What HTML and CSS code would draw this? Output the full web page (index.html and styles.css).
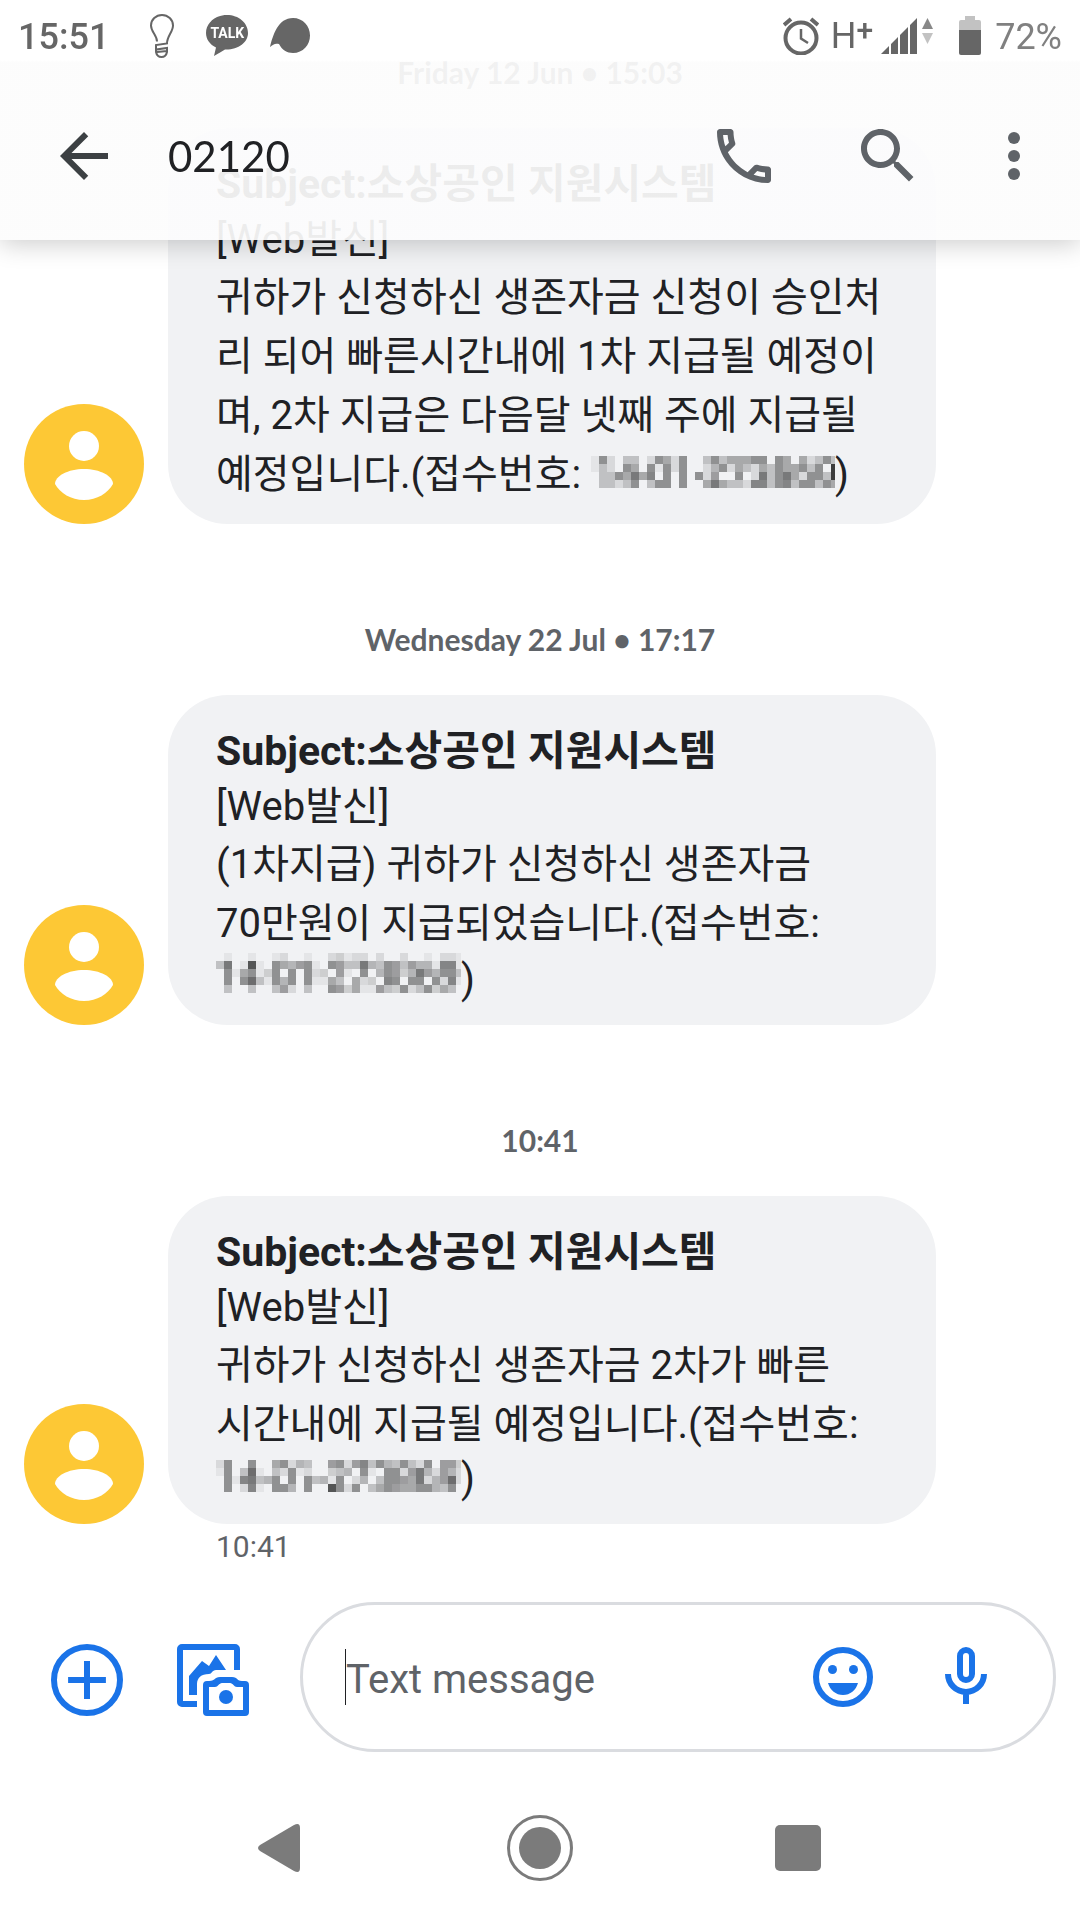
FILE: index.html
```html
<!DOCTYPE html>
<html lang="ko">
<head>
    <meta charset="UTF-8">
    <meta name="viewport" content="width=device-width, initial-scale=1.0">
    <title>02120</title>
    <link rel="stylesheet" href="styles.css">
</head>
<body>
    <header class="top">
        <div class="status">
            <span class="clock">15:51</span>
            <div class="notifications">
                <svg class="bulb" width="24" height="44" viewBox="0 0 24 44"><path d="M7 27.500C7 21 1 18 1 11.500a11 10.500 0 0 1 22 0C23 18 17 22 17 29.500L6 31v4.500l11-1.500v4q-1 5-5.500 5T6 38v-4M7 38l10-1" fill="none" stroke="#666" stroke-width="2"/></svg>
                <div class="talk">
                    <svg width="42" height="42" viewBox="0 0 42 42"><path d="M21 0C9.400 0 0 7.800 0 18c0 6.500 4 11.500 10 14.500L8 41l11-6.500c13 .5 23-7 23-16.500C42 7.800 32.600 0 21 0z" fill="#666"/></svg>
                    <span class="talk-text">TALK</span>
                </div>
                <svg width="40" height="36" viewBox="0 0 40 36"><path d="M0 29C3 17 8 0 23 0c10 0 17 8 17 17.500S33 35 23 35c-6 0-11-3-14-9-4-1-6 .5-9 3z" fill="#666"/></svg>
            </div>
            <div class="system">
                <svg width="36" height="38" viewBox="0 0 36 38"><g fill="none" stroke="#666"><circle cx="18" cy="21" r="15.500" stroke-width="4"/><path d="M18 12v9.500l7 4.500" stroke-width="2.500"/><path d="M1 8l7-6M35 8l-7-6" stroke-width="4"/></g></svg>
                <span class="network">H<b>+</b></span>
                <svg width="52" height="36" viewBox="0 0 52 36"><path d="M0 36l8-8v8zM10 36V26l7-7v17zM19 36V17l8-8v27zM29 36V7l7-7v36z" fill="#666"/><path d="M41 11l5.500-11L52 11z" fill="#888"/><path d="M41 15h11l-5.500 11z" fill="#c2c2c2"/></svg>
                <svg class="battery" width="22" height="40" viewBox="0 0 22 40"><path d="M6 0h10v4h4q2 0 2 2v8H0V6q0-2 2-2h4z" fill="#c2c2c2"/><path d="M0 14h22v23q0 2-2 2H2q-2 0-2-2z" fill="#666"/></svg>
                <span class="percent">72%</span>
            </div>
        </div>
        <div class="toolbar">
            <button class="icon-btn back" aria-label="Back"><svg viewBox="0 0 24 24"><path d="M20 11H7.830l5.590-5.590L12 4l-8 8 8 8 1.410-1.410L7.830 13H20z" fill="#3c4043"/></svg></button>
            <h1 class="title">02120</h1>
            <button class="icon-btn call" aria-label="Call"><svg viewBox="0 0 24 24"><path d="M6.540 5c.06.89.21 1.760.45 2.590l-1.200 1.200c-.41-1.200-.67-2.470-.76-3.790h1.510m9.860 12.020c.85.24 1.720.39 2.600.45v1.490c-1.320-.09-2.590-.35-3.800-.75l1.200-1.190M7.500 3H4c-.55 0-1 .45-1 1 0 9.390 7.610 17 17 17 .55 0 1-.45 1-1v-3.490c0-.55-.45-1-1-1-1.240 0-2.450-.2-3.570-.57-.1-.04-.21-.05-.31-.05-.26 0-.51.1-.71.29l-2.200 2.200c-2.830-1.450-5.150-3.760-6.590-6.590l2.200-2.200c.28-.28.36-.67.25-1.020C8.700 6.450 8.500 5.250 8.500 4c0-.55-.45-1-1-1z"/></svg></button>
            <button class="icon-btn search" aria-label="Search"><svg viewBox="0 0 24 24"><path d="M15.500 14h-.79l-.28-.27C15.410 12.590 16 11.110 16 9.500 16 5.910 13.090 3 9.500 3S3 5.910 3 9.500 5.910 16 9.500 16c1.610 0 3.090-.59 4.230-1.570l.27.28v.79l5 4.990L20.490 19l-4.990-5zm-6 0C7.010 14 5 11.990 5 9.500S7.010 5 9.500 5 14 7.010 14 9.500 11.990 14 9.500 14z"/></svg></button>
            <button class="icon-btn more" aria-label="More options"><svg viewBox="0 0 24 24"><circle cx="12" cy="6" r="2"/><circle cx="12" cy="12" r="2"/><circle cx="12" cy="18" r="2"/></svg></button>
        </div>
    </header>

    <main class="messages">
        <p class="date">Friday 12 Jun • 15:03</p>
        <div class="message">
            <svg class="avatar" viewBox="0 0 120 120"><circle cx="60" cy="60" r="60" fill="#fdc835"/><circle cx="60" cy="42" r="15" fill="#fff"/><path d="M31 80c0-8 13-15 29-15s29 7 29 15c-5 9-16 16-29 16s-24-7-29-16z" fill="#fff"/></svg>
            <div class="bubble">
                <p class="subject">Subject:소상공인 지원시스템</p>
                <p class="origin">[Web발신]</p>
                <p class="text">귀하가 신청하신 생존자금 신청이 승인처<br>리 되어 빠른시간내에 1차 지급될 예정이<br>며, 2차 지급은 다음달 넷째 주에 지급될<br>예정입니다.(접수번호: <svg class="mosaic" data-width="244" data-rows="1820440286280048466688086062484 142086081828002582642648668480f 04486a690808082700802a48a62884f 044248048808006a644299489488486"></svg>)</p>
            </div>
        </div>

        <p class="date">Wednesday 22 Jul • 17:17</p>
        <div class="message">
            <svg class="avatar" viewBox="0 0 120 120"><circle cx="60" cy="60" r="60" fill="#fdc835"/><circle cx="60" cy="42" r="15" fill="#fff"/><path d="M31 80c0-8 13-15 29-15s29 7 29 15c-5 9-16 16-29 16s-24-7-29-16z" fill="#fff"/></svg>
            <div class="bubble">
                <p class="subject">Subject:소상공인 지원시스템</p>
                <p class="origin">[Web발신]</p>
                <p class="text">(1차지급) 귀하가 신청하신 생존자금<br>70만원이 지급되었습니다.(접수번호:</p>
                <p class="number"><svg class="mosaic" data-width="245" data-rows="0100100120010023122020020010221 4a01d1086578108744a548747551991 0816813808082307108058735a75884 0808b41858081164062309808808291 0400400472040087361174382483640"></svg>)</p>
            </div>
        </div>

        <p class="date">10:41</p>
        <div class="message">
            <svg class="avatar" viewBox="0 0 120 120"><circle cx="60" cy="60" r="60" fill="#fdc835"/><circle cx="60" cy="42" r="15" fill="#fff"/><path d="M31 80c0-8 13-15 29-15s29 7 29 15c-5 9-16 16-29 16s-24-7-29-16z" fill="#fff"/></svg>
            <div class="bubble">
                <p class="subject">Subject:소상공인 지원시스템</p>
                <p class="origin">[Web발신]</p>
                <p class="text">귀하가 신청하신 생존자금 2차가 빠른<br>시간내에 지급될 예정입니다.(접수번호:</p>
                <p class="number"><svg class="mosaic" data-width="245" data-rows="2800800682540078279485484280773 1804b10428120034508108827a52752 0819a45808084518025048876a257b2 08029108850800d8280468766885480"></svg>)</p>
            </div>
        </div>
        <p class="sent">10:41</p>
    </main>

    <form class="composer">
        <button type="button" class="attach" aria-label="Add"><svg width="72" height="72" viewBox="0 0 24 24"><circle cx="12" cy="12" r="11" fill="none" stroke="#1a73e8" stroke-width="2"/><path d="M5.700 11H11V5.700h2V11h5.300v2H13v5.300h-2V13H5.700z"/></svg></button>
        <button type="button" class="attach" aria-label="Gallery"><svg width="72" height="72" viewBox="0 0 72 72"><path d="M60 26V5a2 2 0 0 0-2-2H5a2 2 0 0 0-2 2v53a2 2 0 0 0 2 2h15" fill="none" stroke="#1a73e8" stroke-width="6"/><path d="M12 32l13-15 7 5 7-11 10 15H39c-4 0-4 4-7 4-8 0-12 4-12 10v11h-8z"/><path d="M32 37c3 0 5-1 7-3q2-1 4-1h12q2 0 4 1c2 2 3 3 6 3h3q4 0 4 4v27q0 4-4 4H30q-4 0-4-4V41q0-4 4-4zM32 43v23h34V43h-6c-3 0-4-4-7-4h-8c-3 0-4 4-7 4z" fill-rule="evenodd"/><circle cx="49" cy="53" r="7"/></svg></button>
        <div class="field">
            <span class="caret"></span>
            <input type="text" class="input" placeholder="Text message" aria-label="Text message">
            <button type="button" class="icon-btn emoji" aria-label="Emoji"><svg viewBox="0 0 24 24"><circle cx="12" cy="12" r="9" fill="none" stroke="#1a73e8" stroke-width="2"/><circle cx="8.500" cy="9.500" r="1.500"/><circle cx="15.500" cy="9.500" r="1.500"/><path d="M7 14h10c-.7 2.400-2.600 4-5 4s-4.300-1.600-5-4z"/></svg></button>
            <button type="button" class="icon-btn mic" aria-label="Voice"><svg viewBox="0 0 24 24"><rect x="10" y="3" width="4" height="10" rx="2" fill="none" stroke="#1a73e8" stroke-width="2"/><path d="M6 11a6 6 0 0 0 12 0M12 17v4" fill="none" stroke="#1a73e8" stroke-width="2"/></svg></button>
        </div>
    </form>

    <nav class="navbar">
        <button aria-label="Back"><svg width="48" height="48" viewBox="0 0 48 48"><path d="M2 21L36 1q6-3 6 3v40q0 6-6 3L2 27q-4-3 0-6z"/></svg></button>
        <button aria-label="Home"><svg width="66" height="66" viewBox="0 0 66 66"><circle cx="33" cy="33" r="31.500" fill="none" stroke="#7b7b7b" stroke-width="3"/><circle cx="33" cy="33" r="21"/></svg></button>
        <button aria-label="Recent apps"><svg width="46" height="46" viewBox="0 0 46 46"><rect width="46" height="46" rx="5"/></svg></button>
    </nav>

    <script src="script.js"></script>
</body>
</html>
```
FILE: styles.css
```css
* {
    box-sizing: border-box;
}
body {
    margin: 0;
    min-height: 100vh;
    display: flex;
    flex-direction: column;
    background-color: #fff;
    font-family: Roboto, "Noto Sans CJK KR", sans-serif;
    color: #202124;
}
p, h1 {
    margin: 0;
}
button {
    padding: 0;
    border: none;
    background: none;
    cursor: pointer;
}
svg {
    display: block;
    flex: none;
}

/* header lies over the scrolled messages */
.top {
    position: fixed;
    top: 0;
    left: 0;
    right: 0;
    z-index: 1;
    background: linear-gradient(#fff 60px, rgba(252, 252, 252, 0.93) 62px);
    box-shadow: 0 4px 24px rgba(0, 0, 0, 0.2);
}
.status {
    display: flex;
    align-items: center;
    height: 72px;
    padding: 0 18px;
    font-size: 36px;
    line-height: 42px;
    color: #666;
}
.clock {
    padding-top: 2px;
    font-weight: 500;
}
.notifications {
    display: flex;
    align-items: center;
    gap: 22px;
    margin-left: 41px;
}
.bulb {
    margin-right: 10px;
}
.talk {
    display: grid;
}
.talk svg, .talk-text {
    grid-area: 1 / 1;
}
.talk-text {
    color: #fff;
    font-size: 14px;
    font-weight: 700;
    line-height: 36px;
    text-align: center;
}
.system {
    display: flex;
    align-items: center;
    margin-left: auto;
}
.network {
    display: flex;
    margin: 0 8px 0 12px;
}
.network b {
    font-size: 30px;
    font-weight: 500;
    line-height: 30px;
}
.battery {
    margin: 0 14px 0 26px;
}
.percent {
    padding-top: 2px;
    color: #808080;
}
.toolbar {
    display: flex;
    align-items: center;
    height: 168px;
    padding: 0 30px 0 48px;
}
.icon-btn svg {
    width: 72px;
    height: 72px;
    fill: #5f6368;
}
.title {
    flex: 1;
    margin-left: 48px;
    font-family: Lato, sans-serif;
    font-size: 42px;
    font-weight: 400;
}
.search {
    margin: 0 54px 0 72px;
}

.messages {
    flex: 1;
    display: flex;
    flex-direction: column;
    justify-content: flex-end;
}
.date {
    margin: 90px 0 30px;
    font-family: Lato, sans-serif;
    font-size: 30px;
    font-weight: 700;
    line-height: 51px;
    text-align: center;
    color: #5f6368;
}
.date:first-child {
    margin-top: 0;
}
.message {
    display: flex;
    align-items: flex-end;
    gap: 24px;
    padding: 0 144px 0 24px;
}
.avatar {
    width: 120px;
    height: 120px;
}
.bubble {
    flex: 1;
    padding: 28px 48px 20px;
    border-radius: 60px;
    background-color: #f1f2f4;
    font-size: 40px;
    white-space: nowrap;
}
.subject, .origin {
    line-height: 56px;
}
.subject {
    font-size: 41px;
    font-weight: 700;
}
.text {
    line-height: 59px;
}
.number {
    line-height: 50px;
}
.mosaic {
    display: inline;
}
.sent {
    padding: 0 216px;
    font-size: 30px;
    line-height: 45px;
    color: #5f6368;
}

.composer {
    display: flex;
    align-items: center;
    padding: 33px 24px 20px 51px;
}
.attach {
    padding-top: 6px;
    margin-right: 54px;
}
.attach + .attach {
    margin-right: 51px;
}
.attach svg, .composer .icon-btn svg {
    fill: #1a73e8;
}
.field {
    flex: 1;
    display: flex;
    align-items: center;
    min-width: 0;
    height: 150px;
    padding: 0 51px 0 42px;
    border: 3px solid #dadce0;
    border-radius: 75px;
}
.caret {
    width: 1px;
    height: 56px;
    background-color: #202124;
}
.input {
    flex: 1;
    min-width: 0;
    padding: 4px 0 0;
    border: none;
    outline: none;
    background: none;
    font-family: inherit;
    font-size: 40px;
}
.input::placeholder {
    color: #5f6368;
    opacity: 1;
}
.mic {
    margin-left: 51px;
}

.navbar {
    display: grid;
    grid-template-columns: repeat(3, 1fr);
    height: 148px;
    padding: 4px 153px 0;
}
.navbar button {
    display: grid;
    place-items: center;
}
.navbar svg {
    fill: #7b7b7b;
}
```
FILE: script.js
```js
// Draws the pixelated receipt numbers: each hex digit is one 8px cell
var size = 8;

document.querySelectorAll(".mosaic").forEach(function(svg) {
    var rows = svg.dataset.rows.split(" ");
    svg.setAttribute("width", svg.dataset.width);
    svg.setAttribute("height", rows.length * size);

    rows.forEach(function(row, y) {
        row.split("").forEach(function(level, x) {
            var rect = document.createElementNS("http://www.w3.org/2000/svg", "rect");
            rect.setAttribute("x", x * size);
            rect.setAttribute("y", y * size);
            rect.setAttribute("width", size);
            rect.setAttribute("height", size);
            rect.setAttribute("fill-opacity", parseInt(level, 16) * 0.05);
            svg.appendChild(rect);
        });
    });
});
```
